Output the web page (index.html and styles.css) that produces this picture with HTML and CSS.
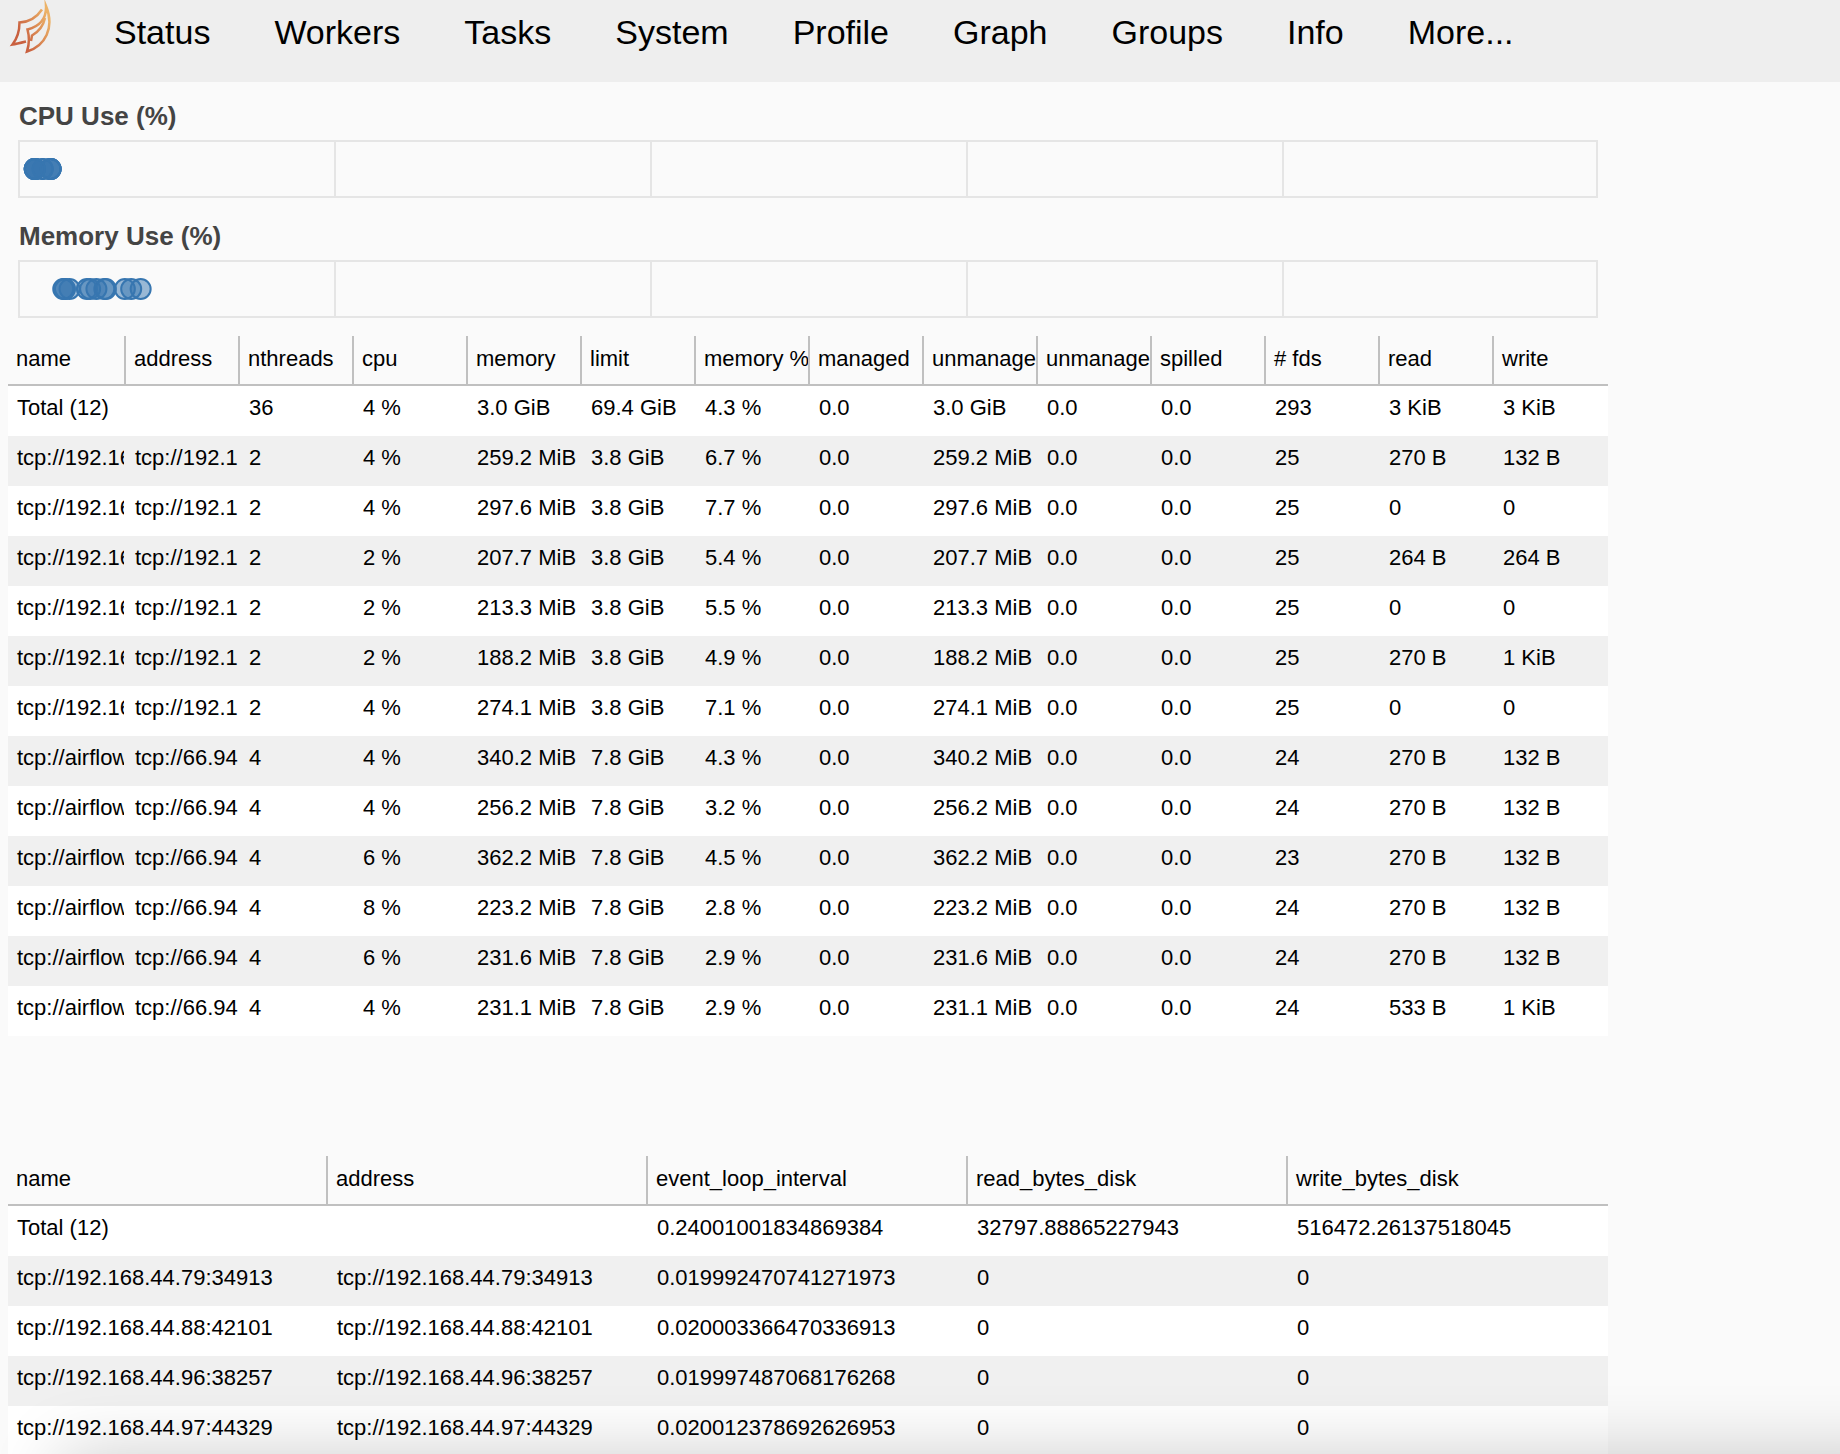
FILE: index.html
```html
<!DOCTYPE html>
<html lang="en">
<head>
<meta charset="utf-8">
<title>Dask: Workers</title>
<link rel="stylesheet" href="styles.css">
</head>
<body>
<header class="navbar">
  <a class="logo" href="#" aria-label="Dask">
    <svg width="56" height="56" viewBox="0 0 56 56" fill="none" stroke="url(#flame)" stroke-width="2.5" stroke-linejoin="miter" stroke-miterlimit="8">
      <defs>
        <linearGradient id="flame" gradientUnits="userSpaceOnUse" x1="20" y1="34" x2="50" y2="20">
          <stop offset="0" stop-color="#c9603f"/>
          <stop offset="1" stop-color="#ecb267"/>
        </linearGradient>
      </defs>
      <path d="M42 9.500C37 17 30 22 19.500 22.500C19.500 31 17.500 38 12.500 44.500C16 44 20 43 26 41.500"/>
      <path d="M46 6C46.500 17 41 26 27.500 29.500C29.500 37 29.500 44 27 51.500C45 46 55 28 46 6Z"/>
      <path d="M45 18C43.500 25 39 31.500 32 35.500L31 41"/>
    </svg>
  </a>
  <nav class="nav-links">
    <a href="#">Status</a>
    <a href="#">Workers</a>
    <a href="#">Tasks</a>
    <a href="#">System</a>
    <a href="#">Profile</a>
    <a href="#">Graph</a>
    <a href="#">Groups</a>
    <a href="#">Info</a>
    <a href="#">More...</a>
  </nav>
</header>
<main class="content">
  <section class="plot">
    <h2>CPU Use (%)</h2>
    <div class="plot-area">
      <i></i><i></i><i></i><i></i><i></i>
      <svg class="dots" width="100%" height="100%">
        <circle cx="2%" cy="50%" r="10"/><circle cx="2%" cy="50%" r="10"/><circle cx="1%" cy="50%" r="10"/><circle cx="1%" cy="50%" r="10"/><circle cx="1%" cy="50%" r="10"/><circle cx="2%" cy="50%" r="10"/><circle cx="1%" cy="50%" r="10"/><circle cx="1%" cy="50%" r="10"/><circle cx="1.5%" cy="50%" r="10"/><circle cx="2%" cy="50%" r="10"/><circle cx="1.5%" cy="50%" r="10"/><circle cx="1%" cy="50%" r="10"/>
      </svg>
    </div>
  </section>
  <section class="plot">
    <h2>Memory Use (%)</h2>
    <div class="plot-area">
      <i></i><i></i><i></i><i></i><i></i>
      <svg class="dots" width="100%" height="100%">
        <circle cx="6.7%" cy="50%" r="10"/><circle cx="7.7%" cy="50%" r="10"/><circle cx="5.4%" cy="50%" r="10"/><circle cx="5.5%" cy="50%" r="10"/><circle cx="4.9%" cy="50%" r="10"/><circle cx="7.1%" cy="50%" r="10"/><circle cx="4.3%" cy="50%" r="10"/><circle cx="3.2%" cy="50%" r="10"/><circle cx="4.5%" cy="50%" r="10"/><circle cx="2.8%" cy="50%" r="10"/><circle cx="2.9%" cy="50%" r="10"/><circle cx="2.9%" cy="50%" r="10"/>
      </svg>
    </div>
  </section>

  <table class="grid workers">
    <thead>
      <tr><th>name</th><th>address</th><th>nthreads</th><th>cpu</th><th>memory</th><th>limit</th><th>memory %</th><th>managed</th><th>unmanage</th><th>unmanage</th><th>spilled</th><th># fds</th><th>read</th><th>write</th></tr>
    </thead>
    <tbody>
      <tr><td>Total (12)</td><td></td><td>36</td><td>4 %</td><td>3.0 GiB</td><td>69.4 GiB</td><td>4.3 %</td><td>0.0</td><td>3.0 GiB</td><td>0.0</td><td>0.0</td><td>293</td><td>3 KiB</td><td>3 KiB</td></tr>
      <tr><td>tcp://192.16</td><td>tcp://192.16</td><td>2</td><td>4 %</td><td>259.2 MiB</td><td>3.8 GiB</td><td>6.7 %</td><td>0.0</td><td>259.2 MiB</td><td>0.0</td><td>0.0</td><td>25</td><td>270 B</td><td>132 B</td></tr>
      <tr><td>tcp://192.16</td><td>tcp://192.16</td><td>2</td><td>4 %</td><td>297.6 MiB</td><td>3.8 GiB</td><td>7.7 %</td><td>0.0</td><td>297.6 MiB</td><td>0.0</td><td>0.0</td><td>25</td><td>0</td><td>0</td></tr>
      <tr><td>tcp://192.16</td><td>tcp://192.16</td><td>2</td><td>2 %</td><td>207.7 MiB</td><td>3.8 GiB</td><td>5.4 %</td><td>0.0</td><td>207.7 MiB</td><td>0.0</td><td>0.0</td><td>25</td><td>264 B</td><td>264 B</td></tr>
      <tr><td>tcp://192.16</td><td>tcp://192.16</td><td>2</td><td>2 %</td><td>213.3 MiB</td><td>3.8 GiB</td><td>5.5 %</td><td>0.0</td><td>213.3 MiB</td><td>0.0</td><td>0.0</td><td>25</td><td>0</td><td>0</td></tr>
      <tr><td>tcp://192.16</td><td>tcp://192.16</td><td>2</td><td>2 %</td><td>188.2 MiB</td><td>3.8 GiB</td><td>4.9 %</td><td>0.0</td><td>188.2 MiB</td><td>0.0</td><td>0.0</td><td>25</td><td>270 B</td><td>1 KiB</td></tr>
      <tr><td>tcp://192.16</td><td>tcp://192.16</td><td>2</td><td>4 %</td><td>274.1 MiB</td><td>3.8 GiB</td><td>7.1 %</td><td>0.0</td><td>274.1 MiB</td><td>0.0</td><td>0.0</td><td>25</td><td>0</td><td>0</td></tr>
      <tr><td>tcp://airflow</td><td>tcp://66.94</td><td>4</td><td>4 %</td><td>340.2 MiB</td><td>7.8 GiB</td><td>4.3 %</td><td>0.0</td><td>340.2 MiB</td><td>0.0</td><td>0.0</td><td>24</td><td>270 B</td><td>132 B</td></tr>
      <tr><td>tcp://airflow</td><td>tcp://66.94</td><td>4</td><td>4 %</td><td>256.2 MiB</td><td>7.8 GiB</td><td>3.2 %</td><td>0.0</td><td>256.2 MiB</td><td>0.0</td><td>0.0</td><td>24</td><td>270 B</td><td>132 B</td></tr>
      <tr><td>tcp://airflow</td><td>tcp://66.94</td><td>4</td><td>6 %</td><td>362.2 MiB</td><td>7.8 GiB</td><td>4.5 %</td><td>0.0</td><td>362.2 MiB</td><td>0.0</td><td>0.0</td><td>23</td><td>270 B</td><td>132 B</td></tr>
      <tr><td>tcp://airflow</td><td>tcp://66.94</td><td>4</td><td>8 %</td><td>223.2 MiB</td><td>7.8 GiB</td><td>2.8 %</td><td>0.0</td><td>223.2 MiB</td><td>0.0</td><td>0.0</td><td>24</td><td>270 B</td><td>132 B</td></tr>
      <tr><td>tcp://airflow</td><td>tcp://66.94</td><td>4</td><td>6 %</td><td>231.6 MiB</td><td>7.8 GiB</td><td>2.9 %</td><td>0.0</td><td>231.6 MiB</td><td>0.0</td><td>0.0</td><td>24</td><td>270 B</td><td>132 B</td></tr>
      <tr><td>tcp://airflow</td><td>tcp://66.94</td><td>4</td><td>4 %</td><td>231.1 MiB</td><td>7.8 GiB</td><td>2.9 %</td><td>0.0</td><td>231.1 MiB</td><td>0.0</td><td>0.0</td><td>24</td><td>533 B</td><td>1 KiB</td></tr>
    </tbody>
  </table>

  <table class="grid metrics">
    <thead>
      <tr><th>name</th><th>address</th><th>event_loop_interval</th><th>read_bytes_disk</th><th>write_bytes_disk</th></tr>
    </thead>
    <tbody>
      <tr><td>Total (12)</td><td></td><td>0.24001001834869384</td><td>32797.88865227943</td><td>516472.26137518045</td></tr>
      <tr><td>tcp://192.168.44.79:34913</td><td>tcp://192.168.44.79:34913</td><td>0.019992470741271973</td><td>0</td><td>0</td></tr>
      <tr><td>tcp://192.168.44.88:42101</td><td>tcp://192.168.44.88:42101</td><td>0.020003366470336913</td><td>0</td><td>0</td></tr>
      <tr><td>tcp://192.168.44.96:38257</td><td>tcp://192.168.44.96:38257</td><td>0.019997487068176268</td><td>0</td><td>0</td></tr>
      <tr><td>tcp://192.168.44.97:44329</td><td>tcp://192.168.44.97:44329</td><td>0.020012378692626953</td><td>0</td><td>0</td></tr>
    </tbody>
  </table>
</main>
<div class="bottom-shade"></div>
</body>
</html>
```
FILE: styles.css
```css
* {
  box-sizing: border-box;
}

body {
  margin: 0;
  height: 100vh;
  overflow: hidden;
  background: #fafafa;
  color: #000;
  font-family: "Liberation Sans", Arial, Helvetica, sans-serif;
}

/* Top navigation */
.navbar {
  display: flex;
  height: 82px;
  background: #eee;
}

.logo {
  width: 114px;
}

.logo svg {
  display: block;
}

.nav-links {
  display: flex;
  gap: 64px;
  padding-top: 12px;
  font-size: 34px;
  line-height: 40px;
}

.nav-links a {
  color: inherit;
  text-decoration: none;
}

.content {
  max-width: 1608px;
  padding: 18px 0 0 8px;
}

/* Usage plots */
.plot {
  padding: 0 10px 20px;
}

.plot h2 {
  margin: 0;
  color: #444;
  font-size: 26px;
  line-height: 32px;
  padding: 0 0 8px 1px;
}

.plot + .plot {
  padding-top: 2px;
  padding-bottom: 18px;
}

.plot-area {
  position: relative;
  display: grid;
  grid-template-columns: repeat(5, 1fr);
  height: 58px;
  border: solid #e5e5e5;
  border-width: 2px 0;
}

.plot-area i {
  border-left: 2px solid #e5e5e5;
}

.plot-area i:last-of-type {
  border-right: 2px solid #e5e5e5;
}

.dots {
  position: absolute;
  top: 0;
  left: 1px;
}

.dots circle {
  fill: #3776b0;
  fill-opacity: 0.5;
  stroke: #3776b0;
  stroke-width: 2;
}

/* Data tables */
.grid {
  width: 100%;
  table-layout: fixed;
  border-collapse: separate;
  border-spacing: 0;
  font-size: 22px;
}

.workers th:first-child {
  width: 118px;
}

.metrics {
  margin-top: 120px;
}

.grid th,
.grid td {
  overflow: hidden;
  white-space: nowrap;
  text-align: left;
  font-weight: normal;
}

.grid th {
  padding: 0 0 2px 8px;
  height: 50px;
  line-height: 46px;
  border-right: 2px solid #c0c0c0;
  border-bottom: 2px solid #c0c0c0;
}

.grid td {
  padding: 0 0 6px 9px;
  height: 50px;
  line-height: 44px;
  border-right: 2px solid transparent;
}

.grid th:last-child {
  border-right: 0;
}

.grid tbody tr {
  background: #fff;
}

.grid tbody tr:nth-child(even) {
  background: #f0f0f0;
}

/* Soft shade rising from the lower window edge */
.bottom-shade {
  position: fixed;
  top: 100%;
  left: 60px;
  right: -80px;
  height: 80px;
  box-shadow: 0 0 70px rgba(0, 0, 0, 0.2);
}
```
